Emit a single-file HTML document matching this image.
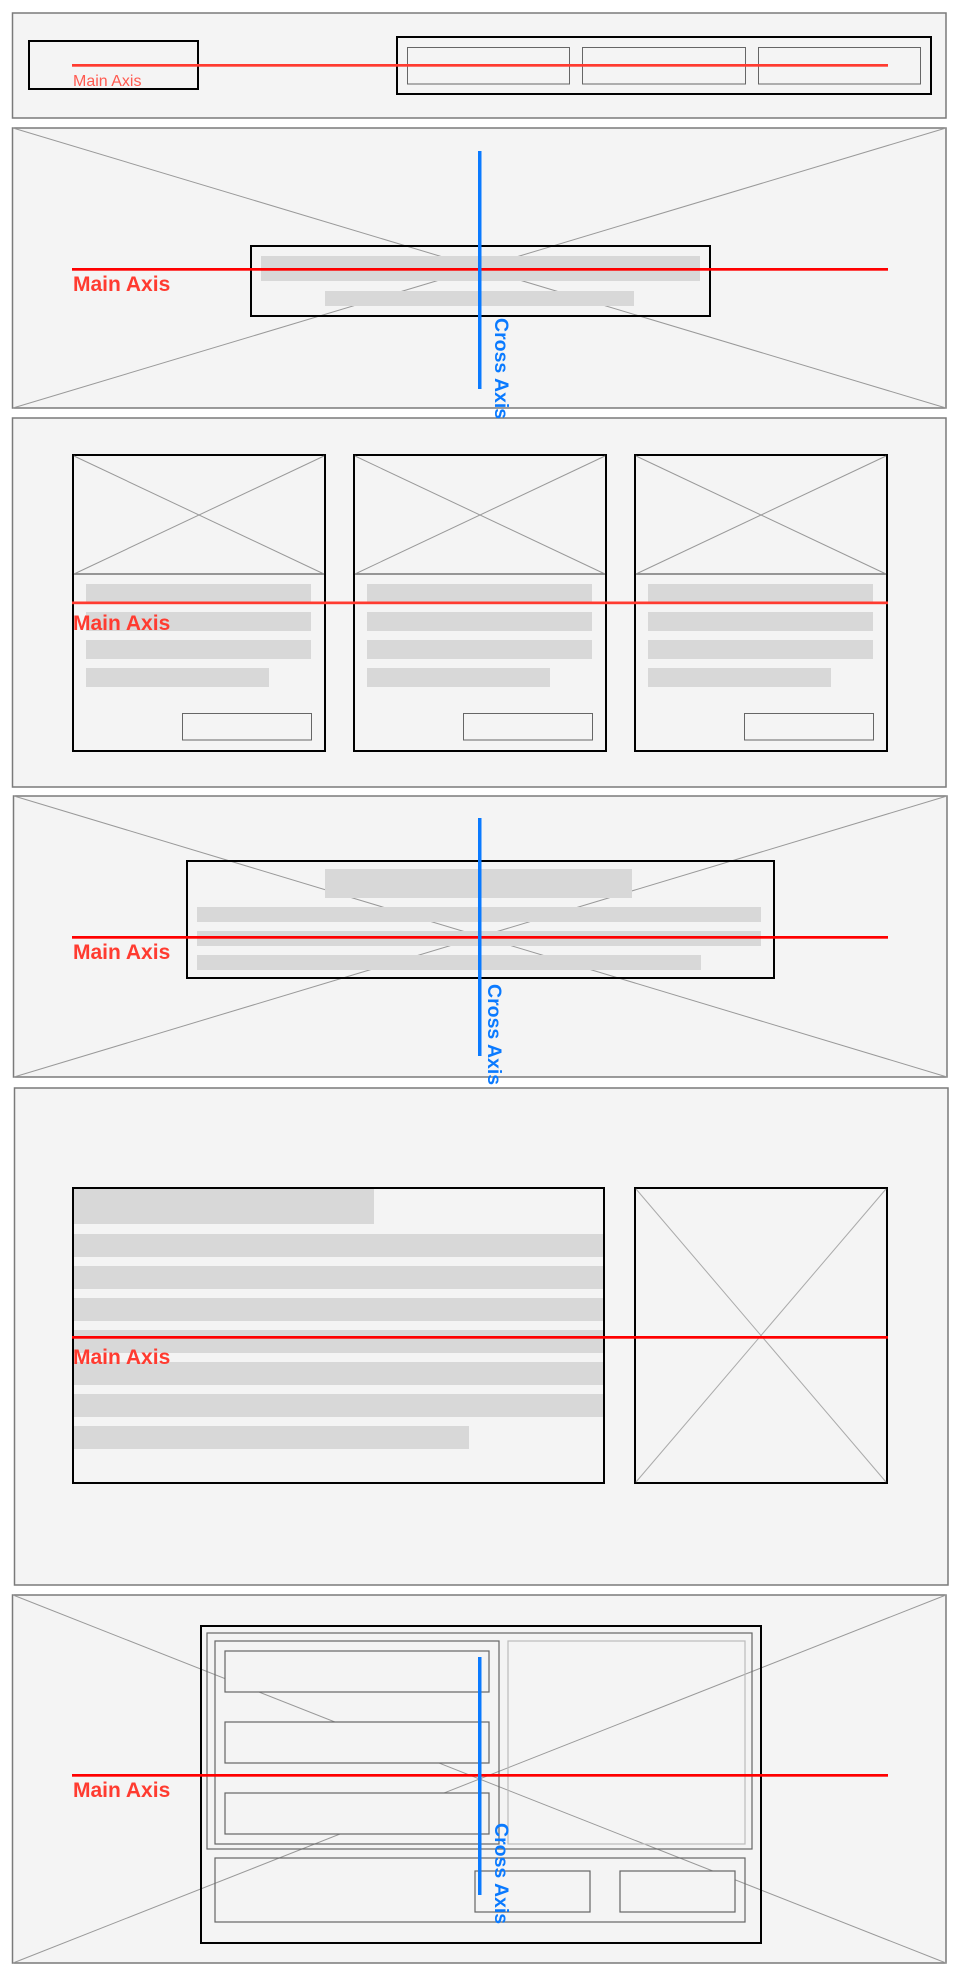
<!DOCTYPE html>
<html><head><meta charset="utf-8"><style>
html,body{margin:0;padding:0;background:#fff;}
svg{display:block;}
.t{font-family:"Liberation Sans",sans-serif;}
</style></head><body>
<svg width="960" height="1975" viewBox="0 0 960 1975" xmlns="http://www.w3.org/2000/svg">
<g fill="#f4f4f4" stroke="#7a7a7a" stroke-width="1.5">
<rect x="12.5" y="13" width="933.5" height="105"/>
<rect x="12.5" y="128" width="933.5" height="280"/>
<rect x="12.5" y="418" width="933.5" height="369"/>
<rect x="13.5" y="796" width="933.5" height="281"/>
<rect x="14.5" y="1088" width="933.5" height="497"/>
<rect x="12.5" y="1595" width="933.5" height="368"/>
</g>
<g stroke="#999" stroke-width="1">
<line x1="13" y1="128" x2="946" y2="408"/><line x1="946" y1="128" x2="13" y2="408"/>
<line x1="14" y1="796" x2="947" y2="1077"/><line x1="947" y1="796" x2="14" y2="1077"/>
<line x1="13" y1="1595" x2="946" y2="1963"/><line x1="946" y1="1595" x2="13" y2="1963"/>
</g>

<rect x="29" y="41" width="169" height="48" fill="none" stroke="#000" stroke-width="2"/>
<rect x="397" y="37" width="534" height="57" fill="none" stroke="#000" stroke-width="2"/>
<g fill="none" stroke="#666" stroke-width="1">
<rect x="407.5" y="47.5" width="162" height="36.5"/>
<rect x="582.5" y="47.5" width="163" height="36.5"/>
<rect x="758.5" y="47.5" width="162" height="36.5"/>
</g>
<rect x="72" y="64" width="816" height="2.7" fill="#ff3b30"/>
<text x="73" y="86" class="t" font-size="16" fill="#ff5a50">Main Axis</text>

<rect x="251" y="246" width="459" height="70" fill="none" stroke="#000" stroke-width="2"/>
<rect x="261" y="256" width="439" height="25" fill="#d8d8d8"/>
<rect x="325" y="291" width="309" height="15" fill="#d8d8d8"/>
<rect x="72" y="268" width="816" height="2.7" fill="#ff0000"/>
<text x="73" y="291" class="t" font-size="21" font-weight="bold" fill="#ff3b30">Main Axis</text>
<rect x="478" y="151" width="3.5" height="238" fill="#0a7aff"/>
<text transform="translate(495,318) rotate(90)" class="t" font-size="19.5" font-weight="bold" fill="#0a7aff">Cross Axis</text>

<g>
<g id="c1">
<rect x="73" y="455" width="252" height="296" fill="none" stroke="#000" stroke-width="2"/>
<line x1="74" y1="574" x2="324" y2="574" stroke="#777" stroke-width="1.5"/>
<line x1="74" y1="456" x2="324" y2="574" stroke="#999"/><line x1="324" y1="456" x2="74" y2="574" stroke="#999"/>
<rect x="86" y="584" width="225" height="18" fill="#d8d8d8"/>
<rect x="86" y="612" width="225" height="19" fill="#d8d8d8"/>
<rect x="86" y="640" width="225" height="19" fill="#d8d8d8"/>
<rect x="86" y="668" width="183" height="19" fill="#d8d8d8"/>
<rect x="182.5" y="713.5" width="129" height="26.5" fill="none" stroke="#666"/>
</g>
<use href="#c1" x="281"/>
<use href="#c1" x="562"/>
</g>
<rect x="72" y="601.5" width="816" height="2.7" fill="#ff3b30"/>
<text x="73" y="630" class="t" font-size="21" font-weight="bold" fill="#ff3b30">Main Axis</text>

<rect x="187" y="861" width="587" height="117" fill="none" stroke="#000" stroke-width="2"/>
<rect x="325" y="869" width="307" height="29" fill="#d8d8d8"/>
<rect x="197" y="907" width="564" height="15" fill="#d8d8d8"/>
<rect x="197" y="931" width="564" height="15" fill="#d8d8d8"/>
<rect x="197" y="955" width="504" height="15" fill="#d8d8d8"/>
<rect x="72" y="936" width="816" height="2.7" fill="#ff0000"/>
<text x="73" y="959" class="t" font-size="21" font-weight="bold" fill="#ff3b30">Main Axis</text>
<rect x="478" y="818" width="3.5" height="238" fill="#0a7aff"/>
<text transform="translate(488,984) rotate(90)" class="t" font-size="19.5" font-weight="bold" fill="#0a7aff">Cross Axis</text>

<rect x="73" y="1188" width="531" height="295" fill="none" stroke="#000" stroke-width="2"/>
<rect x="74" y="1189" width="300" height="35" fill="#d8d8d8"/>
<g fill="#d8d8d8">
<rect x="74" y="1234" width="529" height="23"/>
<rect x="74" y="1266" width="529" height="23"/>
<rect x="74" y="1298" width="529" height="23"/>
<rect x="74" y="1330" width="529" height="23"/>
<rect x="74" y="1362" width="529" height="23"/>
<rect x="74" y="1394" width="529" height="23"/>
<rect x="74" y="1426" width="395" height="23"/>
</g>
<rect x="635" y="1188" width="252" height="295" fill="none" stroke="#000" stroke-width="2"/>
<line x1="636" y1="1189" x2="886" y2="1482" stroke="#aaa"/><line x1="886" y1="1189" x2="636" y2="1482" stroke="#aaa"/>
<rect x="72" y="1336" width="816" height="2.7" fill="#ff0000"/>
<text x="73" y="1364" class="t" font-size="21" font-weight="bold" fill="#ff3b30">Main Axis</text>

<rect x="201" y="1626" width="560" height="317" fill="none" stroke="#000" stroke-width="2"/>
<g fill="none" stroke="#666" stroke-width="1.2">
<rect x="207" y="1633" width="545" height="216"/>
<rect x="215" y="1641" width="284" height="203"/>
<rect x="215" y="1858" width="530" height="64"/>
</g>
<rect x="508" y="1641" width="237" height="203" fill="none" stroke="#bbb" stroke-width="1.2"/>
<g fill="#f4f4f4" stroke="#666" stroke-width="1.2">
<rect x="225" y="1651" width="264" height="41"/>
<rect x="225" y="1722" width="264" height="41"/>
<rect x="225" y="1793" width="264" height="41"/>
<rect x="475" y="1871" width="115" height="41"/>
<rect x="620" y="1871" width="115" height="41"/>
</g>
<rect x="72" y="1774" width="816" height="2.7" fill="#ff0000"/>
<text x="73" y="1797" class="t" font-size="21" font-weight="bold" fill="#ff3b30">Main Axis</text>
<rect x="478" y="1657" width="3.5" height="238" fill="#0a7aff"/>
<text transform="translate(495,1823) rotate(90)" class="t" font-size="19.5" font-weight="bold" fill="#0a7aff">Cross Axis</text>
</svg>
</body></html>
